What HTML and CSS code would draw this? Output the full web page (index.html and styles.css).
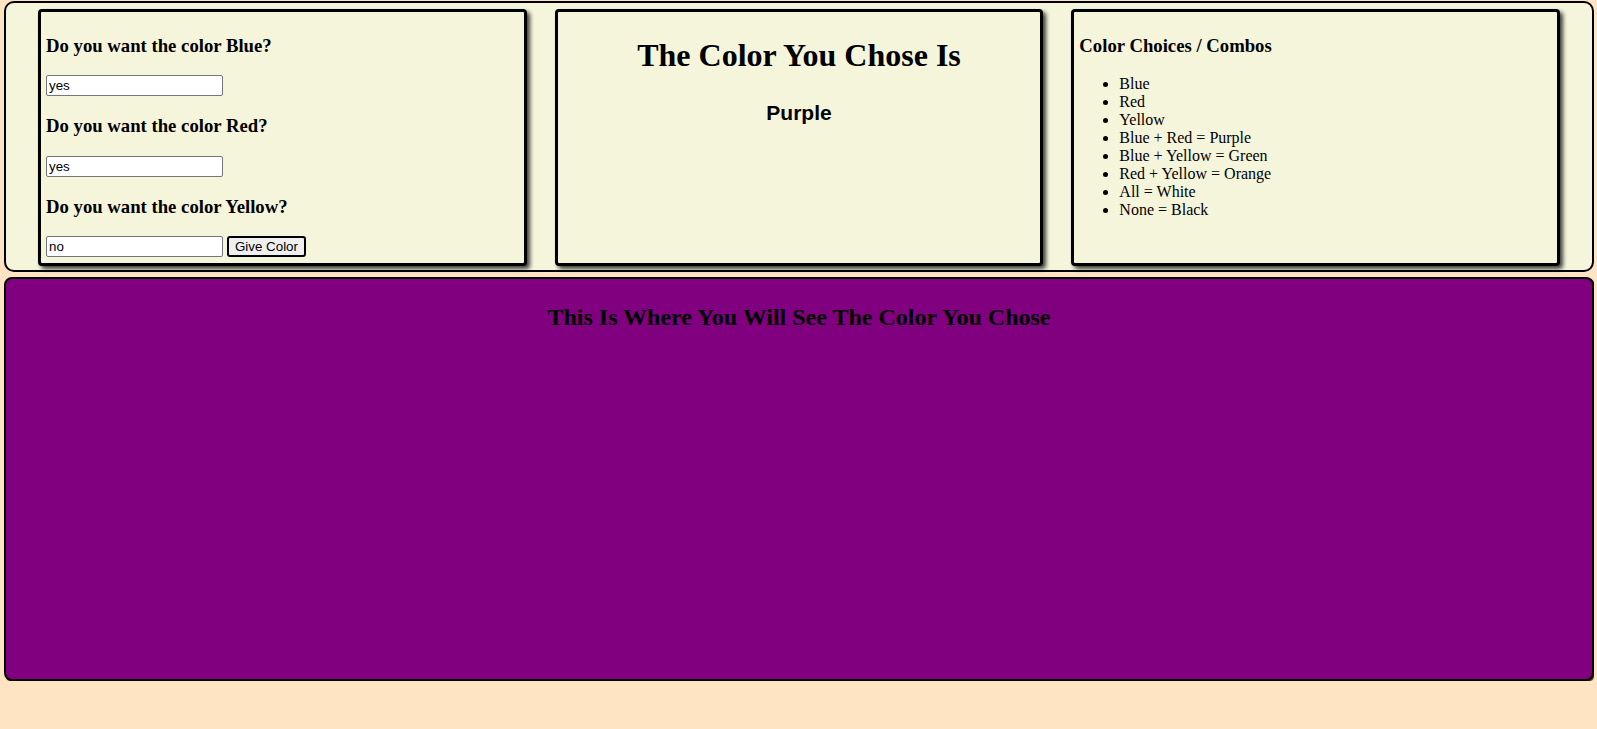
FILE: index.html
```html
<!DOCTYPE html>
<html>
<head>
<meta charset="utf-8">
<title>Color Mixer</title>
<link rel="stylesheet" href="styles.css">
</head>
<body>
<div class="top">
  <div class="card">
    <form class="form">
      <h3 class="q">Do you want the color Blue?</h3>
      <input class="field" type="text" value="yes">
      <h3 class="q">Do you want the color Red?</h3>
      <input class="field" type="text" value="yes">
      <h3 class="q">Do you want the color Yellow?</h3>
      <div class="row"><input class="field" type="text" value="no"> <button class="btn" type="button">Give Color</button></div>
    </form>
  </div>
  <div class="card center">
    <h1 class="title">The Color You Chose Is</h1>
    <h2 class="result">Purple</h2>
  </div>
  <div class="card">
    <h3 class="q">Color Choices / Combos</h3>
    <ul class="list">
      <li>Blue</li>
      <li>Red</li>
      <li>Yellow</li>
      <li>Blue + Red = Purple</li>
      <li>Blue + Yellow = Green</li>
      <li>Red + Yellow = Orange</li>
      <li>All = White</li>
      <li>None = Black</li>
    </ul>
  </div>
</div>
<div class="display">
  <h2 class="display-title">This Is Where You Will See The Color You Chose</h2>
</div>
</body>
</html>
```
FILE: styles.css
```css
html, body {
  background: #ffe4c4;
}
body {
  margin: 1px 3px 0 4px;
  font-family: "Liberation Serif", "Times New Roman", serif;
  color: #000;
}
.top {
  display: flex;
  gap: 28px;
  padding: 6px 32px 4px 32px;
  background: #f5f5dc;
  border: 2px solid #000;
  border-radius: 10px;
}
.card {
  flex: 1 1 0;
  min-width: 0;
  background: #f5f5dc;
  border: 3px solid #000;
  border-radius: 4px;
  padding: 4px 5px 6px;
  box-shadow: 3px 3px 4px rgba(0, 0, 0, 0.75);
}
.center {
  text-align: center;
}
.q {
  font-size: 18.72px;
  font-weight: bold;
  margin: 18.72px 0;
}
.field {
  box-sizing: border-box;
  width: 177px;
  height: 21px;
  margin: 0;
  padding: 1px 2px;
  font-family: "Liberation Sans", Arial, sans-serif;
  font-size: 13.33px;
  color: #000;
  background: #fff;
  border: 1px solid #767676;
  border-radius: 2px;
  vertical-align: middle;
}
.row {
  display: flex;
  align-items: center;
  gap: 4px;
}
.btn {
  box-sizing: border-box;
  height: 21px;
  margin: 0;
  padding: 1px 6px;
  font-family: "Liberation Sans", Arial, sans-serif;
  font-size: 13.33px;
  color: #000;
  background: #efefef;
  border: 2px solid #000;
  border-radius: 3px;
}
.title {
  font-size: 32px;
  font-weight: bold;
  margin: 21.44px 0;
}
.result {
  font-family: "Liberation Sans", Arial, sans-serif;
  font-size: 21px;
  font-weight: bold;
  margin: 27px 0 0;
}
.list {
  margin: 16px 0;
  padding-left: 40px;
  font-size: 16px;
  line-height: 18px;
}
.display {
  box-sizing: border-box;
  height: 404px;
  margin-top: 5px;
  padding: 5px 5px 5px;
  background: #800080;
  border: 2px solid #000;
  border-radius: 8px;
  box-shadow: 1px 1px 1px rgba(0, 0, 0, 0.8);
  text-align: center;
}
.display-title {
  font-size: 24px;
  font-weight: bold;
  margin: 19.92px 0;
}
```
